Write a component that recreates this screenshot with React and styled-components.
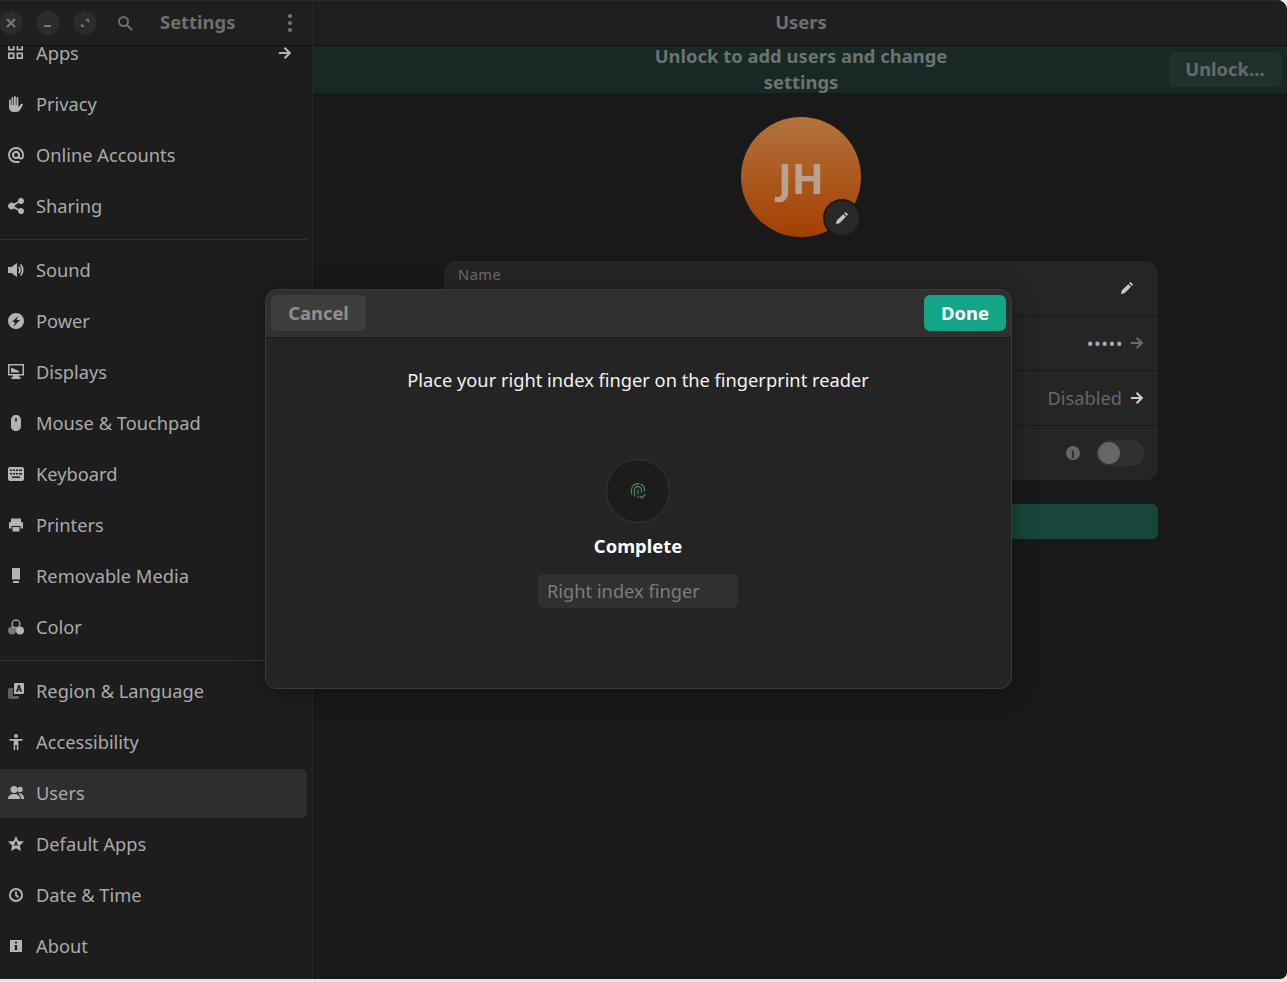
import React from 'react';
import styled, { createGlobalStyle } from 'styled-components';

const Global = createGlobalStyle`
  html, body { margin: 0; padding: 0; background: #e6e6e6; }
  body { font-family: "Noto Sans", "Open Sans", sans-serif; overflow: hidden; }
`;

// symbolic icons, 16x16 like the adwaita set
const icons = {
  apps: <path fillRule="evenodd" d="M0-1h6.500v6.500H0zM8.500-1H15v6.500H8.500zM0 7.500h6.500V14H0zM8.500 7.500H15V14H8.500zM1.700.700v3.100h3.100V.700zM10.200.700v3.100h3.100V.700zM1.700 9.200v3.100h3.100V9.200zM10.200 9.200v3.100h3.100V9.200z" />,
  privacy: <path d="M1 4.500a.9.9 0 0 1 1.800 0V9h.7V2a.9.9 0 0 1 1.800 0v7H6V1a.9.9 0 0 1 1.800 0v8h.7V2a.9.9 0 0 1 1.800 0v8.500l.5.300 2-2.600c.9-1 2.700-.2 2 1.100l-2.700 4.500C11.300 15.200 10 16 8 16H6c-3 0-5-1.800-5-5z" />,
  online: <path fillRule="evenodd" d="M8 0a8 8 0 0 1 8 8v1.300c0 1.900-1.300 3.200-3 3.200-1.100 0-2-.5-2.500-1.300a4.100 4.100 0 1 1 1.600-3.200v1.300c0 .8.400 1.300 1 1.300s1-.5 1-1.300V8A6.100 6.100 0 1 0 8 14.100h3.500V16H8A8 8 0 0 1 8 0zm0 6a2 2 0 1 0 0 4 2 2 0 0 0 0-4z" />,
  sharing: <path d="M13 0a3 3 0 1 1-2.200 5L6.800 7.200a3 3 0 0 1 0 1.600l4 2.200A3 3 0 1 1 10 13v-.4L5.700 10.400a3.300 3.300 0 1 1 0-4.800L10 3.400V3a3 3 0 0 1 3-3z" />,
  sound: <g><path d="M0 5h3.500L9 1v14l-5.500-4H0z" /><path d="M10.700 5a4.200 4.200 0 0 1 0 6M12.500 2.500a8 8 0 0 1 0 11" fill="none" stroke="currentColor" strokeWidth="1.800" /></g>,
  power: <path fillRule="evenodd" d="M8 0a8 8 0 1 1 0 16A8 8 0 0 1 8 0zm2 3L4 9h3l-1.500 4.500L12 7H8.500z" />,
  displays: <path fillRule="evenodd" d="M0 0h16v11.500h-5V13h1.500v2h-9v-2H5v-1.500H0zM1.500 1.500v8.500h13V1.500zM3 3.500l8 3.500v1.500H3z" />,
  mouse: <path fillRule="evenodd" d="M8 0c2.700 0 5 2 5 5v6c0 3-2.300 5-5 5s-5-2-5-5V5c0-3 2.300-5 5-5zm-.8 3v3.500h1.600V3z" />,
  keyboard: <path fillRule="evenodd" d="M2 1h12a2 2 0 0 1 2 2v10a2 2 0 0 1-2 2H2a2 2 0 0 1-2-2V3a2 2 0 0 1 2-2zm0 2.500V5h2V3.500zm3 0V5h2V3.500zm3 0V5h2V3.500zm3 0V5h3V3.500zM2 7v1.500h2V7zm3 0v1.500h2V7zm3 0v1.500h2V7zm3 0v1.500h3V7zM4 10.500V12h8v-1.500z" />,
  printers: <path d="M3 1.500h10v3.500H3zM1 6a1 1 0 0 1 1-1h12a1 1 0 0 1 1 1v5.500h-2.500V9h-9v2.500H1zM4.500 10h7v4.500h-7z" />,
  media: <path d="M4 0h8v11.500H4zM5 13h6v2H5z" />,
  color: <g><circle cx="8" cy="5" r="3.900" fill="none" stroke="currentColor" strokeWidth="1.300" /><circle cx="4" cy="11.500" r="4" opacity=".6" /><circle cx="12" cy="11.500" r="4" /></g>,
  region: <g><path d="M0 7a2 2 0 0 1 2-2h3v8h6v1a2 2 0 0 1-2 2H2a2 2 0 0 1-2-2z" opacity=".45" /><path fillRule="evenodd" d="M7 0h8a1 1 0 0 1 1 1v9a1 1 0 0 1-1 1H6V1a1 1 0 0 1 1-1zm1 9h1.500l.5-1.500h2.100l.5 1.500H14l-2.200-7h-1.600zm2.400-2.800L11 4.200l.7 2z" /></g>,
  access: <path d="M8 0a2 2 0 1 1 0 4 2 2 0 0 1 0-4zM1.500 5h13v1.800H10.300V16H8.800v-5H7.200v5H5.700V6.800H1.500z" />,
  users: <g><circle cx="6" cy="4.500" r="3.500" /><path d="M0 14c0-3.300 2.500-5 6-5s6 1.700 6 5z" /><circle cx="12" cy="4.500" r="2.700" /><path d="M10.500 8.300c3 0 5.500 1.700 5.500 4.700v1h-2.800c-.2-2-1-3.800-2.700-5.700z" /></g>,
  star: <path fillRule="evenodd" d="M8 0l2.300 5 5.700.6-4.200 3.800 1.200 5.600-5-2.800L3 15l1.200-5.600L0 5.600 5.700 5zm-.6 5.500L5.900 10h1.100l.2-.8h1.600l.2.800h1.100L8.600 5.500zM8 6.900l.4 1.200H7.600z" />,
  clock: <path fillRule="evenodd" d="M8 1a7 7 0 1 1 0 14A7 7 0 0 1 8 1zm0 1.900a5.100 5.100 0 1 0 0 10.200A5.100 5.100 0 0 0 8 2.900zM7.100 4.500h1.800v3.100l2.200 2.200-1.300 1.300-2.700-2.700z" />,
  about: <path fillRule="evenodd" d="M2 2h12v12H2zm5 1.800v1.800h2V3.800zM6.500 7v1.300H7v2.400h-.5V12h3v-1.300H9V7z" />,
};

const sections = [
  [['apps', 'Apps', true], ['privacy', 'Privacy'], ['online', 'Online Accounts'], ['sharing', 'Sharing']],
  [['sound', 'Sound'], ['power', 'Power'], ['displays', 'Displays'], ['mouse', 'Mouse & Touchpad'], ['keyboard', 'Keyboard'], ['printers', 'Printers'], ['media', 'Removable Media'], ['color', 'Color']],
  [['region', 'Region & Language'], ['access', 'Accessibility'], ['users', 'Users'], ['star', 'Default Apps'], ['clock', 'Date & Time'], ['about', 'About']],
];

const Icon = ({ name, size = 16 }) => (
  <svg width={size} height={size} viewBox="0 0 16 16" fill="currentColor" overflow="visible">{icons[name]}</svg>
);

const Arrow = () => (
  <svg width="14" height="14" viewBox="0 0 16 16" fill="none" stroke="currentColor" strokeWidth="2.400">
    <path d="M1 8h12.500M7.500 2L13.500 8 7.500 14" />
  </svg>
);

const Pencil = () => (
  <svg width="14" height="14" viewBox="0 0 16 16" fill="currentColor">
    <path d="M12 1l3 3-1.600 1.600-3-3zM9.500 3.600l3 3L5.500 13.800 1 15l1.200-4.500z" />
  </svg>
);

const Fingerprint = () => (
  <svg width="16" height="16" viewBox="0 0 16 16" fill="none" stroke="#44835a" strokeWidth="1.300">
    <path d="M1.500 11.500V7a6.500 6.500 0 0 1 13 0v1.500" strokeDasharray="16 1.200" />
    <path d="M4.500 13.500V7a3.500 3.500 0 0 1 7 0v3" />
    <path d="M8 6.500V11M8 12.500V15" />
    <path d="M10 13l1.800 2 3.500-4" />
  </svg>
);

const Window = styled.div`
  position: relative;
  width: 1287px;
  height: 979px;
  display: flex;
  overflow: hidden;
  background: #191919;
  border-radius: 0 10px 7px 0;
`;

const Sidebar = styled.aside`
  width: 312px;
  flex: none;
  display: flex;
  flex-direction: column;
  background: #1d1d1d;
  border-right: 1px solid #262626;
`;

const Header = styled.header`
  height: 45px;
  flex: none;
  position: relative;
  z-index: 1;
  display: flex;
  align-items: center;
  background: #1f1f1f;
  border-bottom: 1px solid #111;
  box-shadow: inset 0 1px #2a2a2a;
`;

const SideHeader = styled(Header)`
  color: #6f6f6f;
`;

const WinButton = styled.span`
  width: 24px;
  height: 24px;
  flex: none;
  margin-left: ${p => p.$first ? '-1px' : '13px'};
  display: flex;
  align-items: center;
  justify-content: center;
  border-radius: 50%;
  background: #2b2b2b;
  color: #777;
`;

const SearchSlot = styled.span`
  margin-left: 20px;
  display: flex;
  color: #6f6f6f;
`;

const AppTitle = styled.span`
  margin-left: 27px;
  padding-bottom: 3px;
  font-size: 18.4px;
  font-weight: 700;
`;

const Kebab = styled.span`
  margin-left: auto;
  margin-right: 20px;
  display: flex;
  flex-direction: column;
  gap: 3px;
  i { display: block; width: 4px; height: 4px; border-radius: 50%; background: #777; }
`;

const ListClip = styled.div`
  flex: 1;
  min-height: 0;
  overflow: hidden;
`;

const List = styled.nav`
  margin-top: -18px;
  width: 307px;
  display: flex;
  flex-direction: column;
`;

const Row = styled.div`
  height: 49px;
  box-sizing: border-box;
  flex: none;
  margin: 1px 0;
  padding: 0 15px 2px 8px;
  display: flex;
  align-items: center;
  gap: 12px;
  font-size: 18.25px;
  color: #aaa;
  border-radius: 0 6px 6px 0;
  background: ${p => p.$active ? '#2e2e2e' : 'transparent'};
  svg { flex: none; color: #b4b4b4; }
`;

const RowArrow = styled.span`
  margin-left: auto;
  display: flex;
  color: #c4c4c4;
`;

const Divider = styled.hr`
  margin: 7px 0 5px;
  border: 0;
  height: 1px;
  background: #333;
`;

const Main = styled.main`
  flex: 1;
  min-width: 0;
  display: flex;
  flex-direction: column;
`;

const MainTitle = styled.div`
  flex: 1;
  padding: 0 0 3px 2px;
  text-align: center;
  font-size: 18.4px;
  font-weight: 700;
  color: #6f6f6f;
`;

const Banner = styled.div`
  height: 47px;
  flex: none;
  display: grid;
  grid-template-columns: 1fr 330px 1fr;
  grid-template-rows: 47px;
  align-items: center;
  padding-left: 2px;
  background: #182825;
`;

const BannerText = styled.div`
  grid-column: 2;
  padding-bottom: 2px;
  text-align: center;
  font-size: 18.4px;
  font-weight: 700;
  line-height: 26px;
  color: #6c7371;
`;

const UnlockButton = styled.button`
  justify-self: end;
  width: 112px;
  height: 35px;
  margin-right: 6px;
  padding: 0 0 3px;
  border: 0;
  border-radius: 6px;
  background: #20302d;
  color: #636a68;
  font: 700 18.4px "Noto Sans", sans-serif;
`;

const Content = styled.div`
  display: flex;
  flex-direction: column;
  align-items: center;
  padding: 24px 0 0 2px;
`;

const Avatar = styled.div`
  position: relative;
  width: 120px;
  height: 120px;
  display: flex;
  align-items: center;
  justify-content: center;
  border-radius: 50%;
  background: linear-gradient(#b2733d, #a33f00);
  color: #b9a28f;
  font-size: 42px;
  font-weight: 700;
`;

const AvatarEdit = styled.span`
  position: absolute;
  right: 2px;
  bottom: 2px;
  width: 34px;
  height: 34px;
  display: flex;
  align-items: center;
  justify-content: center;
  border-radius: 50%;
  background: #282828;
  box-shadow: 0 0 0 2px #1a1a1a;
  color: #c2c2c2;
`;

const Card = styled.section`
  width: 714px;
  margin-top: 24px;
  border-radius: 12px;
  background: #252525;
`;

const CardRow = styled.div`
  position: relative;
  height: 54px;
  padding: 0 14px;
  display: flex;
  align-items: center;
  justify-content: flex-end;
  gap: 8px;
  font-size: 18.25px;
  color: #666;
  & + & { border-top: 1px solid #181818; }
`;

const FieldLabel = styled.span`
  position: absolute;
  left: 14px;
  top: 3px;
  font-size: 14.67px;
  letter-spacing: 0.5px;
  color: #6d6d6d;
`;

const Dots = styled.span`
  margin-right: -1px;
  color: #aaa;
  font-size: 18px;
  letter-spacing: 0.5px;
`;

const ValueText = styled.span`
  padding-bottom: 2px;
`;

const ArrowSlot = styled.span`
  display: flex;
  color: ${p => p.$bright ? '#cfcfcf' : '#6a6a6a'};
`;

const EditSlot = styled.span`
  margin-right: 10px;
  display: flex;
  color: #c8c8c8;
`;

const InfoDot = styled.span`
  width: 14px;
  height: 14px;
  margin-right: 8px;
  display: flex;
  align-items: center;
  justify-content: center;
  border-radius: 50%;
  background: #666;
  color: #252525;
  font: 700 11px "Noto Sans", sans-serif;
`;

const Toggle = styled.span`
  width: 48px;
  height: 26px;
  padding: 2px;
  box-sizing: border-box;
  border-radius: 13px;
  background: #303030;
  i { display: block; width: 22px; height: 22px; border-radius: 50%; background: #666; }
`;

const WideButton = styled.div`
  width: 714px;
  height: 35px;
  margin-top: 24px;
  border-radius: 6px;
  background: #17463b;
`;

const Dialog = styled.div`
  position: absolute;
  left: 265px;
  top: 289px;
  width: 747px;
  height: 400px;
  box-sizing: border-box;
  display: flex;
  flex-direction: column;
  overflow: hidden;
  background: #242424;
  border: 1px solid #3a3a3a;
  border-radius: 12px;
  box-shadow: 0 2px 24px rgba(0, 0, 0, 0.35);
`;

const DialogBar = styled.div`
  height: 47px;
  flex: none;
  padding: 0 5px;
  display: flex;
  align-items: center;
  justify-content: space-between;
  background: #303030;
  border-bottom: 1px solid #1c1c1c;
`;

const DialogButton = styled.button`
  height: 36px;
  margin-bottom: 1px;
  border: 0;
  border-radius: 6px;
  padding: 0 0 1px;
  width: ${p => p.$width}px;
  background: ${p => p.$primary ? '#14a587' : '#3d3d3d'};
  color: ${p => p.$primary ? '#fff' : '#8f8f8f'};
  font: 700 18.4px "Noto Sans", sans-serif;
`;

const DialogBody = styled.div`
  padding-right: 1px;
  display: flex;
  flex-direction: column;
  align-items: center;
`;

const Prompt = styled.div`
  margin-top: 29px;
  font-size: 18.25px;
  line-height: 26px;
  color: #f2f2f2;
`;

const FingerCircle = styled.div`
  width: 64px;
  height: 64px;
  margin-top: 66px;
  box-sizing: border-box;
  display: flex;
  align-items: center;
  justify-content: center;
  border-radius: 50%;
  background: #1c1c1c;
  border: 1px solid #363636;
`;

const Status = styled.div`
  margin-top: 10px;
  font-size: 18.4px;
  font-weight: 700;
  line-height: 26px;
  color: #fff;
`;

const NameField = styled.div`
  width: 200px;
  height: 34px;
  margin-top: 15px;
  padding-left: 9px;
  box-sizing: border-box;
  border-radius: 6px;
  background: #303030;
  color: #7c7c7c;
  font-size: 18.25px;
  line-height: 34px;
`;

export default function App() {
  return (
    <>
      <Global />
      <Window>
        <Sidebar>
          <SideHeader>
            <WinButton $first><svg width="10" height="10" viewBox="0 0 10 10" stroke="currentColor" strokeWidth="2"><path d="M1 1l8 8M9 1l-8 8" /></svg></WinButton>
            <WinButton><svg width="10" height="10" viewBox="0 0 10 10" fill="currentColor"><path d="M1 7h7v2H1z" /></svg></WinButton>
            <WinButton><svg width="10" height="10" viewBox="0 0 10 10" fill="currentColor"><path d="M5 1h4v4L7.500 3.500 5 1zM1 5l1.500 1.500L5 9H1z" /></svg></WinButton>
            <SearchSlot><svg width="16" height="16" viewBox="0 0 16 16" fill="none" stroke="currentColor" strokeWidth="2"><circle cx="6.500" cy="6.500" r="4.500" /><path d="M10 10l5 5" /></svg></SearchSlot>
            <AppTitle>Settings</AppTitle>
            <Kebab><i /><i /><i /></Kebab>
          </SideHeader>
          <ListClip>
            <List>
              {sections.map((rows, i) => (
                <React.Fragment key={i}>
                  {i > 0 && <Divider />}
                  {rows.map(([icon, label, more]) => (
                    <Row key={label} $active={label === 'Users'}>
                      <Icon name={icon} />
                      {label}
                      {more && <RowArrow><Arrow /></RowArrow>}
                    </Row>
                  ))}
                </React.Fragment>
              ))}
            </List>
          </ListClip>
        </Sidebar>
        <Main>
          <Header><MainTitle>Users</MainTitle></Header>
          <Banner>
            <BannerText>Unlock to add users and change settings</BannerText>
            <UnlockButton>Unlock…</UnlockButton>
          </Banner>
          <Content>
            <Avatar>
              JH
              <AvatarEdit><Pencil /></AvatarEdit>
            </Avatar>
            <Card>
              <CardRow><FieldLabel>Name</FieldLabel><EditSlot><Pencil /></EditSlot></CardRow>
              <CardRow><Dots>•••••</Dots><ArrowSlot><Arrow /></ArrowSlot></CardRow>
              <CardRow><ValueText>Disabled</ValueText><ArrowSlot $bright><Arrow /></ArrowSlot></CardRow>
              <CardRow><InfoDot>i</InfoDot><Toggle><i /></Toggle></CardRow>
            </Card>
            <WideButton />
          </Content>
        </Main>
        <Dialog>
          <DialogBar>
            <DialogButton $width={95}>Cancel</DialogButton>
            <DialogButton $width={82} $primary>Done</DialogButton>
          </DialogBar>
          <DialogBody>
            <Prompt>Place your right index finger on the fingerprint reader</Prompt>
            <FingerCircle><Fingerprint /></FingerCircle>
            <Status>Complete</Status>
            <NameField>Right index finger</NameField>
          </DialogBody>
        </Dialog>
      </Window>
    </>
  );
}
